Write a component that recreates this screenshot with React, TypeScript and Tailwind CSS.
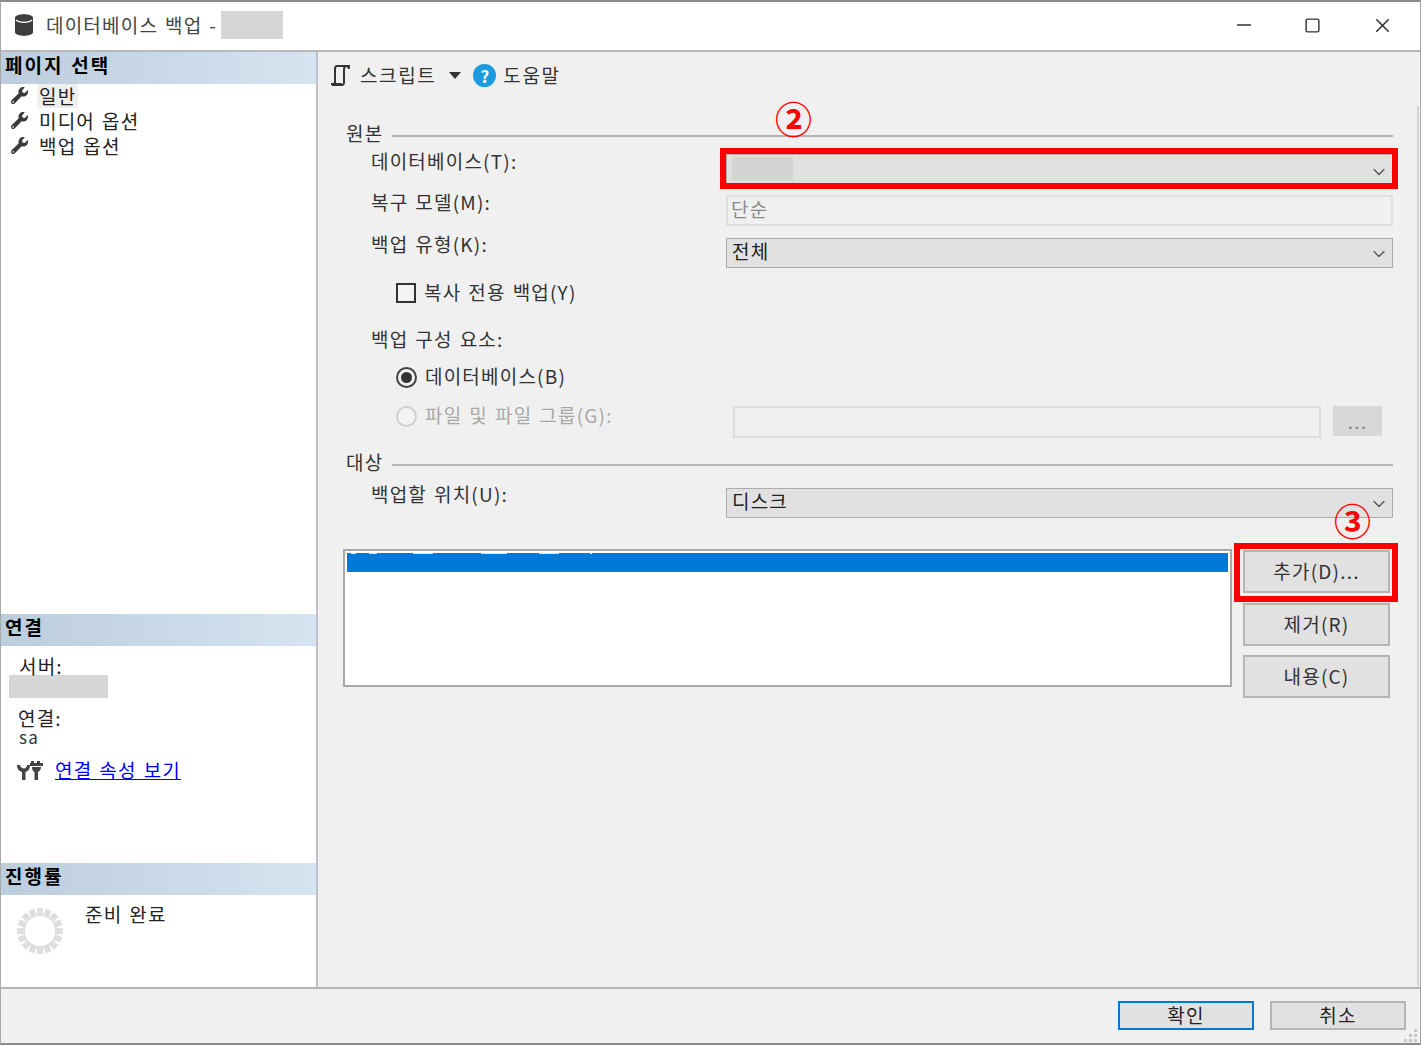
import { FaWrench } from "react-icons/fa";
import { ChevronDown, Minus, Square, X } from "lucide-react";

const FONT = "[font-family:'Noto_Sans_CJK_KR','Liberation_Sans',sans-serif]";

function SideHeader({ text }: { text: string }) {
  return (
    <div className="flex h-8 items-center bg-gradient-to-r from-[#bccddd] to-[#d6e4f1] pb-[5px] pl-1 text-[19px] font-bold tracking-[2px] text-black">
      {text}
    </div>
  );
}

function NavItem({ text, active }: { text: string; active?: boolean }) {
  return (
    <div className="flex h-[25px] items-center pl-[10px]">
      <FaWrench size={17} className="shrink-0 text-[#3a3a3a]" />
      <span className={`ml-[9px] px-[2px] pb-px leading-[23px] text-[#222] ${active ? "bg-[#efefef]" : ""}`}>{text}</span>
    </div>
  );
}

function Combo({ text, mask }: { text?: string; mask?: boolean }) {
  return (
    <div className="flex h-[30px] w-[667px] items-center justify-between border border-[#adadad] bg-[#e1e1e1] pl-[5px] pr-[3px]">
      {mask ? <div className="h-6 w-[61px] bg-[#d4d4d4]" /> : <span className="pb-[3px] text-[#222]">{text}</span>}
      <ChevronDown size={20} strokeWidth={1.6} className={`text-[#555] ${mask ? "mt-[6px]" : "mt-px"}`} />
    </div>
  );
}

function SectionTitle({ text, className }: { text: string; className: string }) {
  return (
    <div className={`flex h-7 items-center text-[#333] ${className}`}>
      <span className="w-[46px] pb-px">{text}</span>
      <div className="mt-1 h-[2px] w-[1001px] bg-[#b4b4b4]" />
    </div>
  );
}

function Label({ text, className = "" }: { text: string; className?: string }) {
  return <div className={`w-[380px] shrink-0 pl-[25px] leading-[18px] text-[#333] ${className}`}>{text}</div>;
}

function SideButton({ text, className = "" }: { text: string; className?: string }) {
  return (
    <div className={`flex h-[43px] w-[147px] items-center justify-center border-2 border-[#b5b5b5] bg-[#e1e1e1] text-[#333] ${className}`}>
      {text}
    </div>
  );
}

function DbIcon() {
  return (
    <svg width="20" height="24" viewBox="0 0 20 24" className="shrink-0">
      <path d="M1 5c0-5 18-5 18 0v14c0 5-18 5-18 0z" fill="#3d3d3d" />
      <path d="M2 7c3 3 13 3 16 0" fill="none" stroke="#fff" strokeWidth="1.4" />
    </svg>
  );
}

function ScriptIcon() {
  return (
    <svg width="22" height="24" viewBox="0 0 22 24" className="shrink-0">
      <path d="M7 3h13M7 3c-2 0-2 2-2 3v13c0 2-1 3-3 3h10c2 0 2-1 2-3V7c0-2 0-4 2-4s3 1 3 3" fill="none" stroke="#333" strokeWidth="2" />
      <path d="M1 22h11v-2H1z" fill="#333" />
    </svg>
  );
}

function PlugIcon() {
  return (
    <svg width="27" height="22" viewBox="0 0 27 22" className="shrink-0">
      <path d="M1 6c0 4 2 6 5 7v8h3.500v-8c3-1 4.500-3 4.500-7h-3c0 2-1.500 3.500-3 3.500S4 8 4 6z" fill="#444" />
      <path d="M15 2h3v2h3V2h3v2h3v3H14V4h1zM16 8h9c0 3-1.500 4-3 5v8h-3.500v-8c-1.500-1-2.500-2-2.500-5z" fill="#444" />
    </svg>
  );
}

function Spinner() {
  const segments = Array.from({ length: 16 }, (_, i) => i * 22.5);
  return (
    <svg width="48" height="48" viewBox="0 0 48 48" className="shrink-0">
      {segments.map((angle) => (
        <rect key={angle} x="21" y="1" width="6" height="8" fill="#dedede" transform={`rotate(${angle} 24 24)`} />
      ))}
    </svg>
  );
}

export default function App() {
  return (
    <div className={`relative h-[1046px] w-[1421px] overflow-hidden bg-white text-[19px] tracking-[1.2px] [word-spacing:1.5px] ${FONT}`}>
      <div className="flex h-[1045px] flex-col border-x border-b-2 border-t-2 border-x-[#a8a8a8] border-b-[#8c8c8c] border-t-[#8c8c8c]">
        {/* Title bar */}
        <div className="flex h-[50px] shrink-0 items-center border-b-2 border-[#b9b9b9] bg-white pb-[2px] pl-[13px] text-[#444]">
          <DbIcon />
          <span className="ml-3">데이터베이스 백업 -</span>
          <div className="ml-[4px] h-7 w-[62px] bg-[#d6d6d6]" />
          <div className="ml-auto flex items-center pr-[26px] text-[#333]">
            <Minus size={22} strokeWidth={1.7} />
            <Square size={17} strokeWidth={2} className="ml-[49px]" />
            <X size={23} strokeWidth={1.6} className="ml-[50px]" />
          </div>
        </div>

        <div className="flex min-h-0 flex-1">
          {/* Side panel */}
          <div className="flex w-[317px] shrink-0 flex-col border-r-2 border-[#c0c0c8] bg-white">
            <div className="h-[562px] shrink-0">
              <SideHeader text="페이지 선택" />
              <div className="mt-[-1px]">
                <NavItem text="일반" active />
                <NavItem text="미디어 옵션" />
                <NavItem text="백업 옵션" />
              </div>
            </div>
            <div className="h-[249px] shrink-0">
              <SideHeader text="연결" />
              <div className="mt-2 pl-[18px] leading-[24px] text-[#222]">서버:</div>
              <div className="ml-2 mt-[-3px] h-[23px] w-[99px] bg-[#d6d6d6]" />
              <div className="mt-2 pl-[17px] leading-[24px] text-[#222]">연결:</div>
              <div className="-mt-[2px] pl-[18px] text-[17px] leading-[17px] text-[#333]">sa</div>
              <div className="mt-[11px] flex items-center pl-[15px]">
                <PlugIcon />
                <span className="ml-3 text-[#0000ff] underline">연결 속성 보기</span>
              </div>
            </div>
            <div className="min-h-0 flex-1">
              <SideHeader text="진행률" />
              <div className="flex pl-[15px] pt-3">
                <Spinner />
                <span className="ml-[21px] mt-[-7px] text-[#222]">준비 완료</span>
              </div>
            </div>
          </div>

          {/* Main panel */}
          <div className="flex min-w-0 flex-1 flex-col bg-[#f0f0f0] pl-7">
            <div className="-ml-[16px] flex h-[46px] shrink-0 items-center tracking-[1.6px] text-[#333]">
              <ScriptIcon />
              <span className="ml-2">스크립트</span>
              <svg width="12" height="7" viewBox="0 0 12 7" className="ml-[13px]">
                <path d="M0 0h12L6 7z" fill="#333" />
              </svg>
              <div className="ml-[12px] flex h-[23px] w-[23px] items-center justify-center rounded-full bg-[#1c9be0] text-[17px] font-bold leading-none tracking-normal text-white">?</div>
              <span className="ml-[7px]">도움말</span>
            </div>

            <SectionTitle text="원본" className="mt-[22px]" />
            <div className="mt-[6px] flex h-[30px]">
              <Label text="데이터베이스(T):" className="-mt-[2px]" />
              <Combo mask />
            </div>
            <div className="mt-[11px] flex h-[31px]">
              <Label text="복구 모델(M):" className="-mt-[2px]" />
              <div className="flex h-[31px] w-[667px] items-center border-2 border-[#e0e0e0] pb-[3px] pl-[3px] text-[#8a8a8a]">단순</div>
            </div>
            <div className="mt-[12px] flex h-[30px]">
              <Label text="백업 유형(K):" className="-mt-[3px]" />
              <Combo text="전체" />
            </div>
            <div className="mt-[15px] flex h-5 items-center pl-[50px] text-[#333]">
              <div className="h-5 w-5 border-2 border-[#333] bg-[#f4f4f4]" />
              <span className="ml-2 pb-[2px]">복사 전용 백업(Y)</span>
            </div>
            <div className="mt-[27px] flex h-5 items-center pb-[2px] pl-[25px] text-[#333]">백업 구성 요소:</div>
            <div className="mt-[17px] flex h-5 items-center pl-[50px] text-[#333]">
              <div className="flex h-[21px] w-[21px] items-center justify-center rounded-full border-2 border-[#444]">
                <div className="h-[11px] w-[11px] rounded-full bg-[#333]" />
              </div>
              <span className="ml-2 pb-px">데이터베이스(B)</span>
            </div>
            <div className="mt-[19px] flex h-[32px]">
              <div className="flex h-5 w-[387px] shrink-0 items-center pl-[50px] text-[#a8a8a8]">
                <div className="h-[21px] w-[21px] rounded-full border-2 border-[#d0d0d0] bg-[#f4f4f4]" />
                <span className="ml-2 pb-[2px]">파일 및 파일 그룹(G):</span>
              </div>
              <div className="h-[32px] w-[588px] border-2 border-[#dedede]" />
              <div className="ml-3 flex h-[30px] w-[49px] items-center justify-center bg-[#d8d8d8] text-[#8a8a8a]">...</div>
            </div>

            <SectionTitle text="대상" className="mt-[11px]" />
            <div className="mt-[11px] flex h-[30px]">
              <Label text="백업할 위치(U):" className="-mt-[3px]" />
              <Combo text="디스크" />
            </div>

            <div className="mt-[31px] flex">
              <div className="-ml-[3px] h-[138px] w-[889px] border-2 border-[#a8a8a8] bg-white p-[2px]">
                <div className="h-[19px] bg-[#0078d7]">
                  <svg width="250" height="1" viewBox="0 0 250 1" className="block">
                    <path d="M4 0h5v1H4zM22 0h8v1h-8zM66 0h20v1H66zM134 0h26v1h-26zM192 0h20v1h-20zM243 0h2v1h-2z" fill="#dbe9f6" />
                  </svg>
                </div>
              </div>
              <div className="ml-[11px] mt-px flex flex-col gap-[9px]">
                <SideButton text="추가(D)..." className="-mb-[-1px]" />
                <SideButton text="제거(R)" />
                <SideButton text="내용(C)" />
              </div>
            </div>
          </div>
        </div>

        {/* Footer */}
        <div className="flex h-[56px] shrink-0 items-start justify-end border-t-2 border-[#b4b4b4] bg-[#f0f0f0] pr-[14px] pt-3">
          <div className="flex h-[29px] w-[136px] items-center justify-center border-2 border-[#0078d7] bg-[#e1e1e1] text-[#222]">확인</div>
          <div className="ml-[16px] flex h-[29px] w-[136px] items-center justify-center border-2 border-[#b5b5b5] bg-[#e1e1e1] text-[#222]">취소</div>
        </div>
      </div>

      {/* Annotations laid over the dialog */}
      <div className="absolute left-[720px] top-[148px] h-[41px] w-[678px] border-[6px] border-[#ff0000]" />
      <div className="absolute left-[1234px] top-[543px] h-[59px] w-[164px] border-[6px] border-[#ff0000]" />
      <div className="absolute left-[775px] top-[91px] text-[37px] font-bold leading-[54px] tracking-normal text-[#ff0000]">②</div>
      <div className="absolute left-[1334px] top-[493px] text-[37px] font-bold leading-[54px] tracking-normal text-[#ff0000]">③</div>
      <div className="absolute left-[1417px] top-[106px] h-[880px] w-[2px] bg-[#d4d4d4]" />
      {/* Resize grip */}
      <svg width="14" height="14" viewBox="0 0 14 14" className="absolute left-[1404px] top-[1028px]">
        <path d="M10 1h3v3h-3zM5 6h3v3H5zM10 6h3v3h-3zM0 11h3v3H0zM5 11h3v3H5zM10 11h3v3h-3z" fill="#c8c8c8" />
      </svg>
    </div>
  );
}
